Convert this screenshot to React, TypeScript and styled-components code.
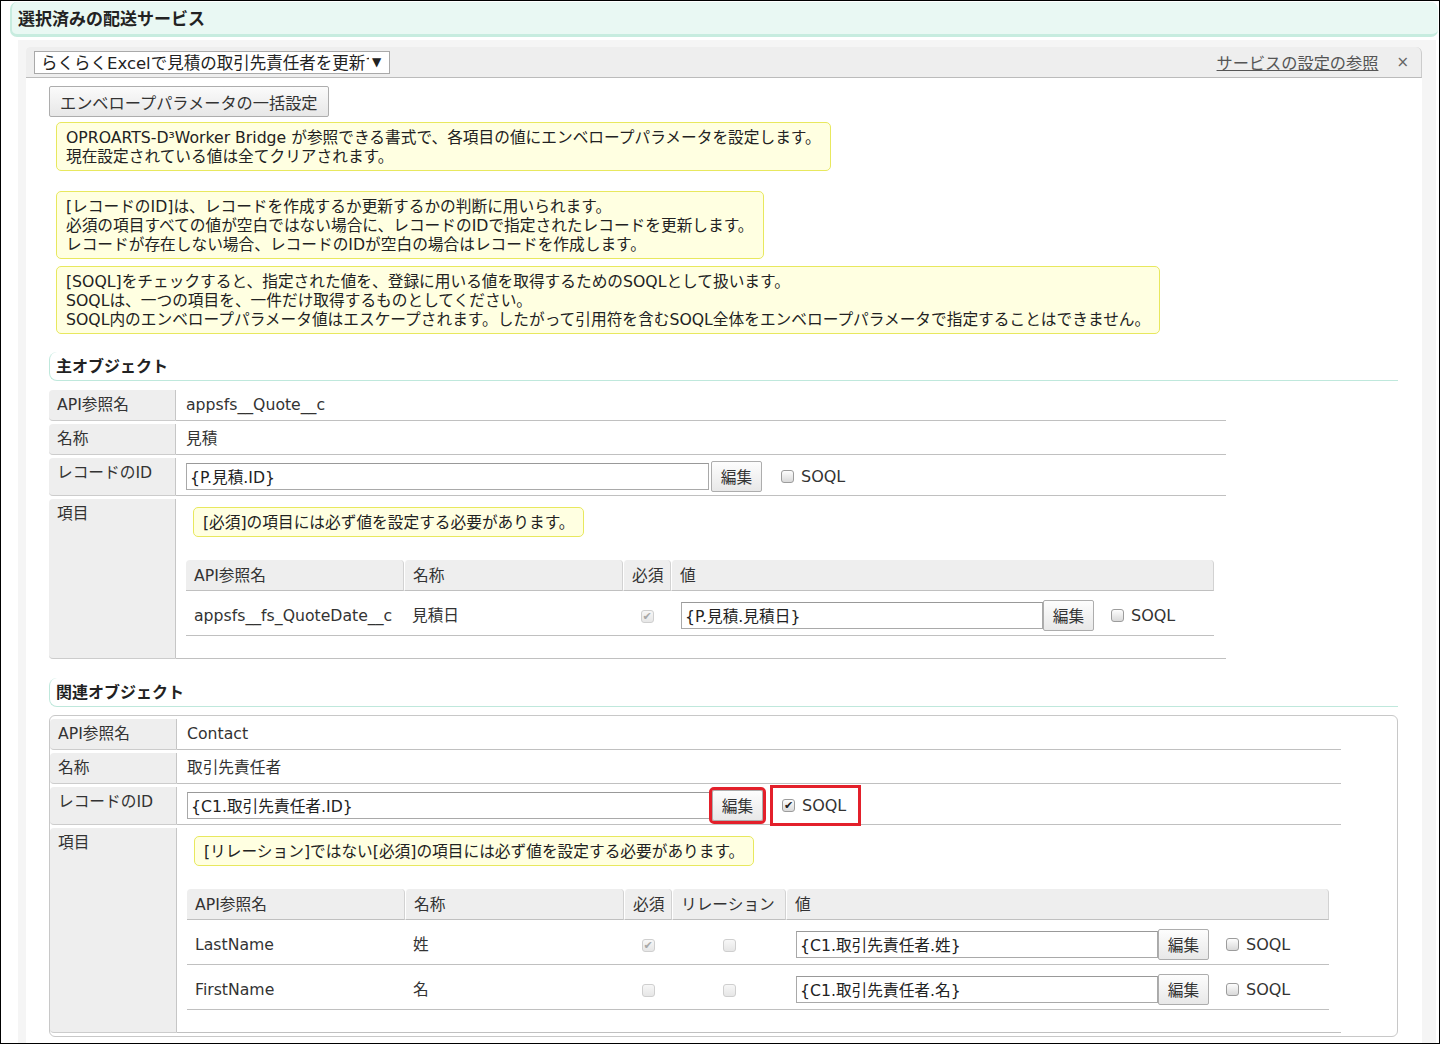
import React from 'react'
import styled, { createGlobalStyle } from 'styled-components'

const GlobalStyle = createGlobalStyle`
  html, body {
    margin: 0;
    padding: 0;
    background: #fff;
  }
  body {
    font-family: "DejaVu Sans", "Noto Sans CJK JP", sans-serif;
    font-size: 15.7px;
    color: #333;
  }
  * {
    box-sizing: border-box;
  }
`

const Frame = styled.div`
  width: 1440px;
  height: 1044px;
  padding: 1px 1px 0 9px;
  border: 1px solid #000;
  overflow: hidden;
  display: flex;
  flex-direction: column;
`
const PageHeader = styled.div`
  height: 35px;
  padding: 0 0 2px 6px;
  display: flex;
  align-items: center;
  flex-shrink: 0;
  font-size: 17px;
  font-weight: 700;
  color: #222;
  background: #e9f8f3;
  border-left: 2px solid #c7ecdf;
  border-bottom: 3px solid #c7ecdf;
  border-radius: 7px;
`
const Panel = styled.div`
  flex: 1;
  margin: 3px 2px 0 8px;
  padding: 7px 14px 0 8px;
  background: #f5f5f5;
`
const Card = styled.div`
  height: 100%;
  background: #fff;
  border-radius: 4px 6px 0 0;
`
const TopBar = styled.div`
  height: 31px;
  padding: 0 12px 0 8px;
  display: flex;
  align-items: center;
  background: #eee;
  border-bottom: 1px solid #bbb;
  border-right: 1px solid #ccc;
  border-radius: 4px 6px 0 0;
`
const FakeSelect = styled.div`
  width: 356px;
  height: 23px;
  padding: 0 6px 0 6px;
  display: flex;
  align-items: center;
  font-size: 16.5px;
  color: #222;
  background: #fff;
  border: 1px solid #a9a9a9;
  span {
    flex: 1;
    min-width: 0;
    overflow: hidden;
    white-space: nowrap;
  }
  i {
    width: 14px;
    padding-left: 3px;
    flex-shrink: 0;
    font-style: normal;
    font-size: 12px;
  }
`
const BarLink = styled.a`
  margin-left: auto;
  font-size: 16.2px;
  color: #555;
  text-decoration: underline;
`
const CloseMark = styled.span`
  margin-left: 18px;
  font-size: 15px;
  color: #666;
`
const Content = styled.div`
  padding: 8px 24px 0 23px;
`
const BigButton = styled.button`
  height: 31px;
  padding: 0 10px;
  font-family: inherit;
  font-size: 16.2px;
  color: #333;
  background: linear-gradient(#fbfbfb, #e7e7e7);
  border: 1px solid #adadad;
  border-radius: 2px;
`
const Note = styled.div<{ $mt?: number }>`
  width: fit-content;
  margin: ${p => p.$mt ?? 0}px 0 0 7px;
  padding: 5px 9px 4px;
  line-height: 19px;
  color: #222;
  background: #ffffe1;
  border: 1px solid #e8e85e;
  border-radius: 5px;
`
const SectionTitle = styled.div<{ $mt: number }>`
  height: 29px;
  margin-top: ${p => p.$mt}px;
  padding: 0 0 3px 6px;
  display: flex;
  align-items: center;
  font-size: 16px;
  font-weight: 700;
  color: #222;
  border-left: 1px solid #bfe8dc;
  border-bottom: 1px solid #bfe8dc;
  border-radius: 8px 0 0 8px;
`
const DetailGrid = styled.div<{ $width: number; $mt?: number }>`
  width: ${p => p.$width}px;
  margin-top: ${p => p.$mt ?? 0}px;
  display: grid;
  grid-template-columns: 127px 1fr;
  row-gap: 3px;
`
const RelatedBox = styled.div`
  margin-top: 8px;
  padding: 3px 0 3px;
  border: 1px solid #c8c8c8;
  border-radius: 6px;
`
const Label = styled.div`
  padding: 5px 8px 6px;
  line-height: 19px;
  color: #333;
  background: #eee;
  border-right: 1px solid #c6c6c6;
  border-bottom: 1px solid #ccc;
  border-radius: 4px 0 0 4px;
`
const Value = styled.div<{ $kind?: 'text' | 'field' | 'items' }>`
  padding: ${p =>
    p.$kind === 'field' ? '3px 10px' : p.$kind === 'items' ? '8px 12px 22px 10px' : '5px 10px 6px'};
  display: ${p => (p.$kind === 'field' ? 'flex' : 'block')};
  align-items: center;
  line-height: 19px;
  border-bottom: 1px solid #c0c0c0;
`
const TextInput = styled.input<{ $width: number }>`
  width: ${p => p.$width}px;
  height: 27px;
  padding: 0 3px;
  font-family: inherit;
  font-size: 15.7px;
  color: #222;
  background: #fff;
  border: 1px solid #a9a9a9;
  border-top-color: #999;
  border-radius: 0;
  outline: none;
`
const EditButton = styled.button<{ $ml?: number; $hl?: boolean }>`
  width: 51px;
  height: 31px;
  margin-left: ${p => p.$ml ?? 0}px;
  padding: 0;
  font-family: inherit;
  font-size: 15.7px;
  color: #333;
  background: linear-gradient(#fdfdfd, #e8e8e8);
  border: 1px solid #adadad;
  border-radius: 2px;
  outline: ${p => (p.$hl ? '3px solid #e3202b' : 'none')};
`
const SoqlLabel = styled.label<{ $ml: number; $hl?: boolean }>`
  height: 35px;
  margin: -2px 0 -2px ${p => p.$ml}px;
  padding: 0 12px 0 9px;
  display: inline-flex;
  align-items: center;
  gap: 7px;
  font-size: 16px;
  color: #333;
  outline: ${p => (p.$hl ? '3px solid #e3202b' : 'none')};
`
const Box = styled.span<{ $checked?: boolean; $disabled?: boolean }>`
  width: 13px;
  height: 13px;
  display: inline-flex;
  align-items: center;
  justify-content: center;
  vertical-align: middle;
  font-family: "DejaVu Sans", sans-serif;
  font-size: 11px;
  line-height: 1;
  color: ${p => (p.$disabled ? '#a8a8a8' : '#222')};
  background: ${p => (p.$disabled ? 'linear-gradient(#f7f7f7, #e6e6e6)' : 'linear-gradient(#fdfdfd, #d9d9d9)')};
  border: 1px solid ${p => (p.$disabled ? '#cfcfcf' : '#9c9c9c')};
  border-radius: 3px;
`
const SubTable = styled.table<{ $width: number }>`
  width: ${p => p.$width}px;
  margin-top: 23px;
  border-collapse: separate;
  border-spacing: 0;
  table-layout: fixed;
  th {
    height: 31px;
    padding: 0 8px;
    font-weight: 400;
    text-align: left;
    color: #333;
    background: #eee;
    border-bottom: 1px solid #c0c0c0;
    border-right: 1px solid #d2d2d2;
    border-left: 1px solid #fff;
    border-radius: 4px 4px 0 0;
    white-space: nowrap;
  }
  th:first-child {
    border-left: none;
  }
  td {
    height: 45px;
    padding: 4px 8px 0;
    white-space: nowrap;
    border-bottom: 1px solid #c0c0c0;
  }
`
const CheckCell = styled.td`
  text-align: center;
`
const FieldCell = styled.td`
  && {
    padding-left: 10px;
  }
  > div {
    display: flex;
    align-items: center;
  }
`

type Item = { api: string; name: string; required: boolean; value: string }

function SubRow({ item, relation }: { item: Item; relation: boolean }) {
  return (
    <tr>
      <td>{item.api}</td>
      <td>{item.name}</td>
      <CheckCell>
        <Box $checked={item.required} $disabled>{item.required ? '✔' : ''}</Box>
      </CheckCell>
      {relation && (
        <CheckCell>
          <Box $disabled />
        </CheckCell>
      )}
      <FieldCell>
        <div>
          <TextInput $width={362} defaultValue={item.value} readOnly />
          <EditButton>編集</EditButton>
          <SoqlLabel $ml={8}>
            <Box />
            SOQL
          </SoqlLabel>
        </div>
      </FieldCell>
    </tr>
  )
}

const mainItems: Item[] = [
  { api: 'appsfs__fs_QuoteDate__c', name: '見積日', required: true, value: '{P.見積.見積日}' },
]
const relatedItems: Item[] = [
  { api: 'LastName', name: '姓', required: true, value: '{C1.取引先責任者.姓}' },
  { api: 'FirstName', name: '名', required: false, value: '{C1.取引先責任者.名}' },
]

export default function App() {
  return (
    <>
      <GlobalStyle />
      <Frame>
        <PageHeader>選択済みの配送サービス</PageHeader>
        <Panel>
          <Card>
            <TopBar>
              <FakeSelect>
                <span>らくらくExcelで見積の取引先責任者を更新する</span>
                <i>▼</i>
              </FakeSelect>
              <BarLink>サービスの設定の参照</BarLink>
              <CloseMark>×</CloseMark>
            </TopBar>
            <Content>
              <BigButton>エンベロープパラメータの一括設定</BigButton>
              <Note $mt={5}>
                OPROARTS-D³Worker Bridge が参照できる書式で、各項目の値にエンベロープパラメータを設定します。<br />
                現在設定されている値は全てクリアされます。
              </Note>
              <Note $mt={20}>
                [レコードのID]は、レコードを作成するか更新するかの判断に用いられます。<br />
                必須の項目すべての値が空白ではない場合に、レコードのIDで指定されたレコードを更新します。<br />
                レコードが存在しない場合、レコードのIDが空白の場合はレコードを作成します。
              </Note>
              <Note $mt={7}>
                [SOQL]をチェックすると、指定された値を、登録に用いる値を取得するためのSOQLとして扱います。<br />
                SOQLは、一つの項目を、一件だけ取得するものとしてください。<br />
                SOQL内のエンベロープパラメータ値はエスケープされます。したがって引用符を含むSOQL全体をエンベロープパラメータで指定することはできません。
              </Note>

              <SectionTitle $mt={18}>主オブジェクト</SectionTitle>
              <DetailGrid $width={1177} $mt={9}>
                <Label>API参照名</Label>
                <Value>appsfs__Quote__c</Value>
                <Label>名称</Label>
                <Value>見積</Value>
                <Label>レコードのID</Label>
                <Value $kind="field">
                  <TextInput $width={523} defaultValue="{P.見積.ID}" readOnly />
                  <EditButton $ml={2}>編集</EditButton>
                  <SoqlLabel $ml={10}>
                    <Box />
                    SOQL
                  </SoqlLabel>
                </Value>
                <Label>項目</Label>
                <Value $kind="items">
                  <Note>[必須]の項目には必ず値を設定する必要があります。</Note>
                  <SubTable $width={1028}>
                    <colgroup>
                      <col style={{ width: 218 }} />
                      <col style={{ width: 219 }} />
                      <col style={{ width: 48 }} />
                      <col />
                    </colgroup>
                    <thead>
                      <tr>
                        <th>API参照名</th>
                        <th>名称</th>
                        <th>必須</th>
                        <th>値</th>
                      </tr>
                    </thead>
                    <tbody>
                      {mainItems.map(it => (
                        <SubRow key={it.api} item={it} relation={false} />
                      ))}
                    </tbody>
                  </SubTable>
                </Value>
              </DetailGrid>

              <SectionTitle $mt={19}>関連オブジェクト</SectionTitle>
              <RelatedBox>
                <DetailGrid $width={1291}>
                  <Label>API参照名</Label>
                  <Value>Contact</Value>
                  <Label>名称</Label>
                  <Value>取引先責任者</Value>
                  <Label>レコードのID</Label>
                  <Value $kind="field">
                    <TextInput $width={523} defaultValue="{C1.取引先責任者.ID}" readOnly />
                    <EditButton $ml={2} $hl>編集</EditButton>
                    <SoqlLabel $ml={10} $hl>
                      <Box $checked>✔</Box>
                      SOQL
                    </SoqlLabel>
                  </Value>
                  <Label>項目</Label>
                  <Value $kind="items">
                    <Note>[リレーション]ではない[必須]の項目には必ず値を設定する必要があります。</Note>
                    <SubTable $width={1142}>
                      <colgroup>
                        <col style={{ width: 218 }} />
                        <col style={{ width: 219 }} />
                        <col style={{ width: 48 }} />
                        <col style={{ width: 114 }} />
                        <col />
                      </colgroup>
                      <thead>
                        <tr>
                          <th>API参照名</th>
                          <th>名称</th>
                          <th>必須</th>
                          <th>リレーション</th>
                          <th>値</th>
                        </tr>
                      </thead>
                      <tbody>
                        {relatedItems.map(it => (
                          <SubRow key={it.api} item={it} relation />
                        ))}
                      </tbody>
                    </SubTable>
                  </Value>
                </DetailGrid>
              </RelatedBox>
            </Content>
          </Card>
        </Panel>
      </Frame>
    </>
  )
}
